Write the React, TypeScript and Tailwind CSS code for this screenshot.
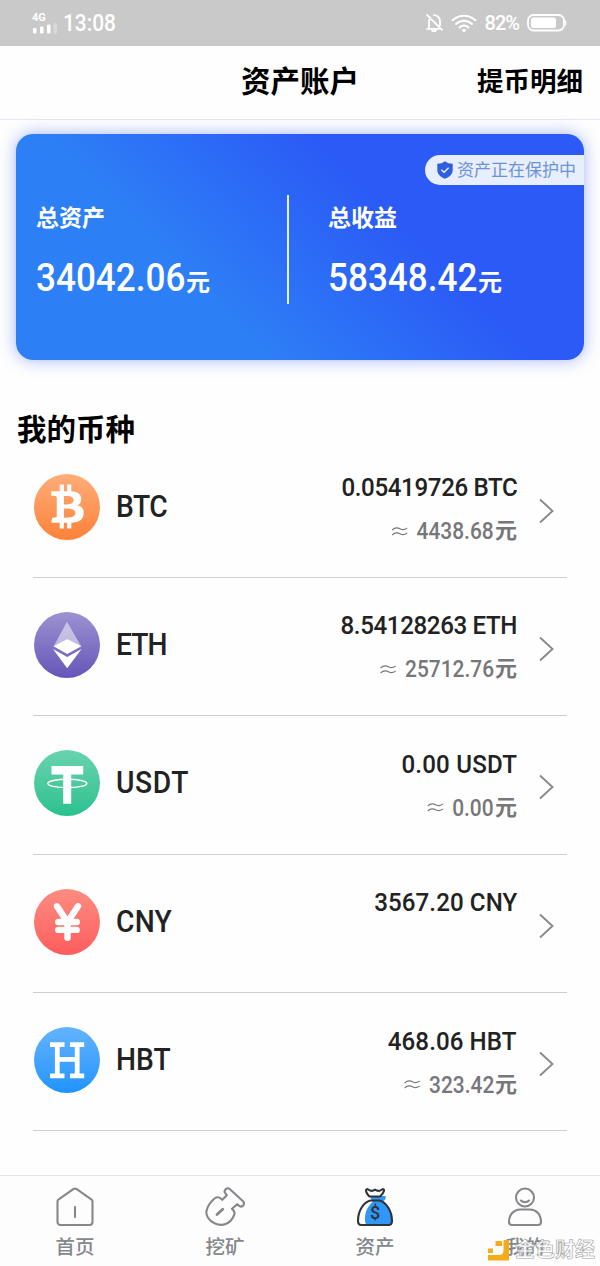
import type { ReactNode } from 'react'
import { FaBtc } from 'react-icons/fa'
import { FaYenSign } from 'react-icons/fa6'

interface Coin {
  symbol: string
  amount: string
  value?: string
  color: string
  symbolTracking: string
  amountTracking: string
  icon: ReactNode
}

const coins: Coin[] = [
  {
    symbol: 'BTC',
    amount: '0.05419726',
    value: '4438.68',
    color: 'from-[#fdad78] to-[#fc8136]',
    symbolTracking: 'tracking-[-0.5px]',
    amountTracking: 'tracking-[-0.4px]',
    icon: <FaBtc className="ml-[2px] h-[45px] w-[33px]" />,
  },
  {
    symbol: 'ETH',
    amount: '8.54128263',
    value: '25712.76',
    color: 'from-[#9d92d0] to-[#6655b8]',
    symbolTracking: 'tracking-[-1px]',
    amountTracking: 'tracking-[-0.4px]',
    icon: (
      <svg viewBox="0 0 66 66" className="size-[66px]" fill="currentColor">
        <path d="M33 9.7 19.5 34.5 33 27.3l14.3 7.2z" opacity=".5" />
        <path d="M19.5 34.3 33.2 27l14.2 7.3L33.2 42z" />
        <path d="m19 37 14.2 8 14.3-8-14.3 19.3z" />
      </svg>
    ),
  },
  {
    symbol: 'USDT',
    amount: '0.00',
    value: '0.00',
    color: 'from-[#67d3ae] to-[#28c18f]',
    symbolTracking: 'tracking-[0.7px]',
    amountTracking: 'tracking-[0.2px]',
    icon: (
      <svg viewBox="0 0 66 66" className="size-[66px]">
        <path d="M17.5 16h31.7v8.6H37.2v29.2h-8V24.6H17.5z" fill="currentColor" />
        <ellipse cx="33.3" cy="33.4" rx="19.5" ry="4.2" fill="none" stroke="currentColor" strokeWidth="1.5" />
      </svg>
    ),
  },
  {
    symbol: 'CNY',
    amount: '3567.20',
    color: 'from-[#fd8c80] to-[#fd5b5d]',
    symbolTracking: 'tracking-[0.3px]',
    amountTracking: 'tracking-[0.1px]',
    icon: <FaYenSign className="ml-px h-[42px] w-[31px]" stroke="currentColor" strokeWidth="14" />,
  },
  {
    symbol: 'HBT',
    amount: '468.06',
    value: '323.42',
    color: 'from-[#62b3fd] to-[#1c93fd]',
    symbolTracking: 'tracking-normal',
    amountTracking: 'tracking-[0.1px]',
    icon: (
      <svg viewBox="0 0 66 66" className="size-[66px]" fill="none" stroke="currentColor" strokeWidth="4.8">
        <path d="M16 17.7h14.5M16 48.8h14.5M36 17.7h14.2M36 48.8h14.2M23.3 17.7v31M43.2 17.7v31M23 32.3h20" />
      </svg>
    ),
  },
]

function StatusBar() {
  return (
    <div className="flex h-[46px] shrink-0 items-center bg-[#c9c9c9] pl-8 pr-[33px] text-white">
      <div className="flex w-[26px] flex-col gap-px">
        <span className="text-[11px] font-bold leading-[9px]">4G</span>
        <svg viewBox="0 0 26 11" className="h-[11px] w-[26px]" fill="currentColor">
          <rect x="1" y="5" width="3.5" height="5.5" rx="1" />
          <rect x="8" y="3.5" width="3.5" height="7" rx="1" />
          <rect x="15" y="1.5" width="3.5" height="9" rx="1" />
          <rect x="21.5" y="0" width="3.5" height="10.5" rx="1" opacity=".3" />
        </svg>
      </div>
      <span className="ml-[5px] origin-left scale-x-[0.87] text-[24px] font-medium leading-none">13:08</span>
      <svg viewBox="0 0 20 20" className="ml-auto size-5" fill="none" stroke="currentColor" strokeWidth="1.8">
        <path d="M4 15.5v-7a6 6 0 0 1 2-4.3M8 2.3a6 6 0 0 1 7 5.7v5M1.500 15.8h14M1.500 1.300l16 16" />
        <path d="M6 16.5h6a3 2.700 0 0 1-6 0z" fill="currentColor" stroke="none" />
      </svg>
      <svg viewBox="0 0 26 19" className="ml-[6px] h-[19px] w-[26px]" fill="none" stroke="currentColor" strokeWidth="2" strokeLinecap="round">
        <path d="M1.500 6.200c6.800-6 16.200-6 23 0M5 10c4.800-4.400 11.200-4.400 16 0M8.500 13.500c2.900-2.500 6.100-2.500 9 0" />
        <path d="M10.500 16.200c1.600-1.500 3.400-1.500 5 0L13 18.500z" fill="currentColor" stroke="none" />
      </svg>
      <span className="ml-[8px] text-[20px] font-medium leading-none tracking-[-1px]">82%</span>
      <svg viewBox="0 0 40 18" className="ml-[8px] h-[18px] w-10" fill="none">
        <rect x="1" y="1" width="36" height="15.5" rx="5.5" stroke="currentColor" strokeWidth="1.8" />
        <rect x="4" y="3.5" width="25" height="10.5" rx="2.5" fill="currentColor" />
        <path d="M38.200 5.500c1.500.8 1.500 6 0 6.800z" fill="currentColor" />
      </svg>
    </div>
  )
}

function Total({ label, value }: { label: string; value: string }) {
  return (
    <div className="whitespace-nowrap pt-[68px]">
      <div className="text-[23px] font-bold leading-[34px]">{label}</div>
      <div className="mt-[18px] flex items-baseline leading-[48px]">
        <span className="-mr-[16px] origin-left scale-x-90 text-[39px] font-medium">{value}</span>
        <span className="text-[24px] font-bold">元</span>
      </div>
    </div>
  )
}

function AssetCard() {
  return (
    <section className="relative mx-4 mt-[14px] flex h-[226px] shrink-0 rounded-[17px] bg-[linear-gradient(45deg,#2d7ff6_32%,#2b5af6_66%)] pl-[20px] text-white shadow-[0_0_16px_rgba(70,105,245,0.5)]">
      <div className="w-[251px]">
        <Total label="总资产" value="34042.06" />
      </div>
      <div className="mr-[39px] mt-[61px] h-[109px] w-[2px] bg-white/90" />
      <Total label="总收益" value="58348.42" />
      <div className="absolute right-0 top-[21px] flex h-[30px] w-[159px] items-center rounded-l-full bg-[#e7eefd] pl-[12px]">
        <svg viewBox="0 0 16 18" className="h-[18px] w-4 shrink-0">
          <path d="M8 .3C10 2 12.500 2.800 15.700 2.800V9c0 4-3 7-7.700 8.700C3.300 16 .3 13 .3 9V2.800C3.500 2.800 6 2 8 .3z" fill="#2f5fe0" />
          <path d="m4.300 8.800 2.700 2.500 4.700-4.500" fill="none" stroke="#e7eefd" strokeWidth="1.5" />
        </svg>
        <span className="ml-[4px] whitespace-nowrap text-[17px] leading-none text-[#6d92d6]">资产正在保护中</span>
      </div>
    </section>
  )
}

function CoinRow({ coin }: { coin: Coin }) {
  return (
    <li className="flex h-[138.4px] border-b border-[#cfcfcf] pr-[13px]">
      <div className={`ml-[0.5px] mt-[34px] flex size-[66px] items-center justify-center rounded-full bg-linear-to-b text-white ${coin.color}`}>
        {coin.icon}
      </div>
      <span className={`ml-[16px] mt-[47px] origin-left scale-x-[0.91] text-[31px] font-medium leading-10 text-[#222] ${coin.symbolTracking}`}>
        {coin.symbol}
      </span>
      <div className="ml-auto whitespace-nowrap text-right">
        <div className={`mt-[31.5px] origin-right scale-x-[0.91] text-[26.5px] font-medium leading-8 text-[#222] ${coin.amountTracking}`}>
          {coin.amount} {coin.symbol}
        </div>
        {coin.value && (
          <div className="mt-[12px] flex items-center justify-end leading-8 text-[#77777a]">
            <div className="flex origin-right scale-x-[0.89] items-center">
              <svg viewBox="0 0 18 9" className="mr-[10px] h-[9px] w-[18px]" fill="none" stroke="currentColor" strokeWidth="1.1">
                <path d="M.5 3C4.500-.5 8 1 10 2s4.500 1 7.500-1M.5 8C4.500 4.500 8 6 10 7s4.500 1 7.500-1" />
              </svg>
              <span className="text-[23.5px] font-medium">{coin.value}</span>
            </div>
            <span className="ml-px text-[22px] font-bold">元</span>
          </div>
        )}
      </div>
      <svg viewBox="0 0 15 26" className="ml-[22px] mt-[58px] h-[26px] w-[15px]" fill="none" stroke="#8a8a8a" strokeWidth="1.9">
        <path d="M1 1.500 13.500 13 1 24.500" />
      </svg>
    </li>
  )
}

const tabs = [
  {
    label: '首页',
    icon: <path d="M2.500 14.500c0-1 .4-1.700 1.200-2.200L18.300 2.200a3 3 0 0 1 3.400 0l14.600 10.100c.8.500 1.200 1.200 1.200 2.200V35a3 3 0 0 1-3 3h-29a3 3 0 0 1-3-3zM20 20v10" />,
  },
  {
    label: '挖矿',
    icon: (
      <>
        <path d="M9.500 11.500c2.200-1.500 5-1.300 6.500.2l1.300 1.100 4.500-4.600-1.100-1.500a3 3 0 0 1 4.300-4.400L38 14.200a3 3 0 0 1-4.200 4.400l-1.600-1.400-5.200 4.600 1.500 1.700c1.500 1.800 1.300 3.500.2 5.500C25 37.500 17 39.500 10 36.500S.8 27.500 1.500 24c.8-4.500 4-9 8-12.500z" />
        <path d="m12 27.500 5.700-5.200" strokeWidth="2.800" />
      </>
    ),
  },
  {
    label: '资产',
    icon: (
      <>
        <path d="M15 9h15c1.500 0 1 4-2 5.500 5 2.500 8.500 10 8.500 19 0 3-1 4.500-3 4.500H14c-3 0-4-2-4-5 0-9 2.500-13 7.500-18z" fill="#2f97f8" stroke="none" />
        <path d="M14.500 9.500c-2-2-3.500-5-3.500-6s1-1.800 2.200-1c2.800 2 4.300 2 6.800.2 2.500 1.800 4.500 1.800 7-.2 1.200-.8 2.300 0 2 1.200-.5 2-2 4-4 5.800z" fill="#fff" stroke="#303336" />
        <path d="M15.500 13.500h9C31 15 37 24 37 34c0 3-1.200 4-3.500 4h-27C4 38 3 37 3 34c0-10 5.500-19 12.500-20.500z" stroke="#303336" />
        <text x="20" y="32" textAnchor="middle" fontSize="18" fontWeight="500" fill="#303336" stroke="none">$</text>
      </>
    ),
  },
  {
    label: '我的',
    icon: (
      <>
        <circle cx="20" cy="10.5" r="9" />
        <path d="M16 13.500c2 2.200 6 2.200 8 0M4 35c0-8 5.500-12.500 11-12.500h10C31 22.500 36 27 36 35c0 2-1 3-3 3H7c-2 0-3-1-3-3z" />
      </>
    ),
  },
]

function TabBar() {
  return (
    <nav className="mt-auto grid h-[91px] shrink-0 grid-cols-4 border-t border-[#e4e4e4] bg-[#fdfdfd]">
      {tabs.map((tab) => (
        <a key={tab.label} className="flex flex-col items-center pt-[11px] text-[#85878a]">
          <svg viewBox="0 0 40 40" className="size-10" fill="none" stroke="currentColor" strokeWidth="2.1" strokeLinejoin="round" strokeLinecap="round">
            {tab.icon}
          </svg>
          <span className="mt-[7px] text-[19.5px] font-medium leading-7">{tab.label}</span>
        </a>
      ))}
    </nav>
  )
}

function Watermark() {
  return (
    <div className="absolute bottom-[3px] right-[5px] flex h-[26px] items-center">
      <svg viewBox="0 0 22 21" className="h-[21px] w-[22px]" fill="#f6ab1a">
        <path d="M15.500 0H21v20.500H0V15h11c3 0 4.500-1.500 4.500-4.500zM7.500 1H14v5H7.500zM0 8.500h5V13H0z" />
      </svg>
      <span className="ml-[5px] whitespace-nowrap text-[20px] font-bold leading-none text-white/80 [-webkit-text-stroke:0.6px_#a0a0a0]">
        金色财经
      </span>
    </div>
  )
}

export default function App() {
  return (
    <div className="relative flex h-[1266px] w-[600px] flex-col overflow-hidden bg-[#fefefe] font-[Roboto,'Noto_Sans_CJK_SC',sans-serif]">
      <StatusBar />
      <header className="grid h-[74px] shrink-0 grid-cols-[1fr_auto_1fr] items-center border-b border-[#e6e8f2] pr-[17px] text-black">
        <h1 className="col-start-2 pl-[17px] text-[29.5px] font-bold leading-none">资产账户</h1>
        <span className="justify-self-end whitespace-nowrap text-[26.5px] font-bold leading-none">提币明细</span>
      </header>
      <AssetCard />
      <h2 className="mt-[50px] pl-[17px] text-[29.5px] font-bold leading-10 text-black">我的币种</h2>
      <ul className="-mt-[10.5px] mx-[33px]">
        {coins.map((coin) => (
          <CoinRow key={coin.symbol} coin={coin} />
        ))}
      </ul>
      <TabBar />
      <Watermark />
    </div>
  )
}
